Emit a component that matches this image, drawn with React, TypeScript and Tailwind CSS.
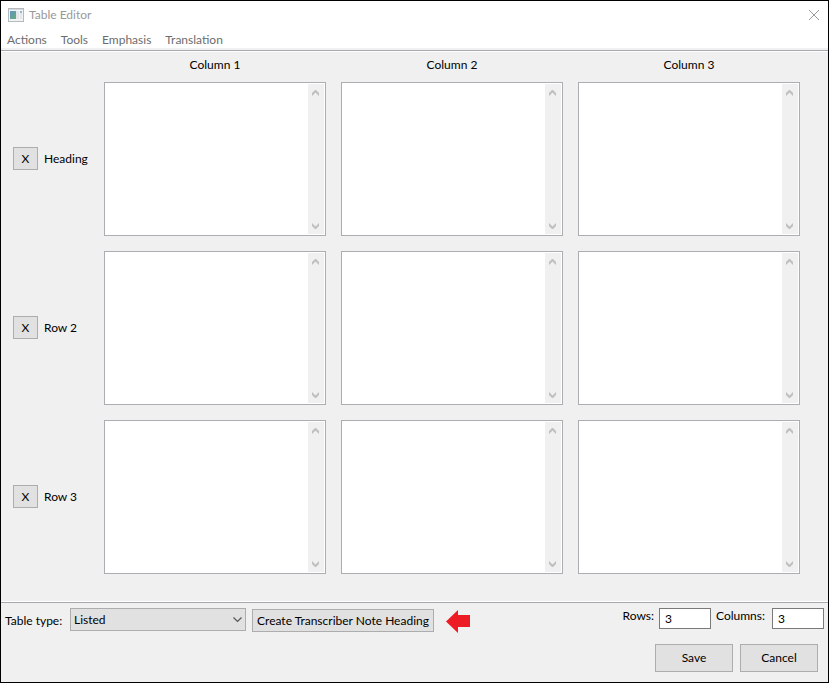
import { useState } from 'react';

const MENUS = ['Actions', 'Tools', 'Emphasis', 'Translation'];
const COLUMNS = ['Column 1', 'Column 2', 'Column 3'];
const ROWS = ['Heading', 'Row 2', 'Row 3'];
const TABLE_TYPES = ['Listed', 'Simple', 'Stairstep', 'Linear'];

function WindowIcon() {
  return (
    <svg width="16" height="14" viewBox="0 0 16 14" shapeRendering="crispEdges" aria-hidden="true">
      <defs>
        <linearGradient id="pane" x1="0" y1="0" x2="1" y2="1">
          <stop offset="0" stopColor="#6595c4" />
          <stop offset="1" stopColor="#5fae78" />
        </linearGradient>
      </defs>
      <rect x="0.5" y="0.5" width="15" height="13" fill="#f1f3f5" stroke="#b4b9c0" />
      <rect x="1" y="1" width="14" height="1" fill="#d5d9de" />
      <rect x="2" y="3" width="6" height="8" fill="url(#pane)" />
      <rect x="8" y="3" width="3" height="8" fill="#e4e7ea" />
      <rect x="12" y="3" width="2" height="2" fill="#8fbccd" />
      <rect x="12" y="5" width="2" height="6" fill="#e4e7ea" />
    </svg>
  );
}

function ScrollArrow({ down = false }: { down?: boolean }) {
  return (
    <svg width="8" height="6" viewBox="0 0 8 6" aria-hidden="true">
      <path d={down ? 'M0 0v3l3 3h1l3-3V0L3.5 3.5z' : 'M0 6V3l3-3h1l3 3v3L3.5 2.5z'} fill="#bfbfbf" />
    </svg>
  );
}

function Cell({ label }: { label: string }) {
  return (
    <div className="flex h-[154px] border border-[#abadb3] bg-white p-px">
      <textarea aria-label={label} className="min-w-0 flex-1 resize-none overflow-hidden px-1 outline-none" />
      <div className="flex w-4 flex-col items-center justify-between bg-[#f0f0f0] pt-1.5 pb-[5px]" aria-hidden="true">
        <ScrollArrow />
        <ScrollArrow down />
      </div>
    </div>
  );
}

export default function App() {
  const [rows, setRows] = useState('3');
  const [columns, setColumns] = useState('3');

  return (
    <div className="flex min-h-screen flex-col border border-black bg-[#f0f0f0] font-['Lato','Open_Sans',sans-serif] text-[12px] leading-4 text-black">
      <header className="border-b border-[#a7a8b0] bg-white">
        <div className="flex h-7 items-center gap-[5px] pr-2 pl-[7px] text-[#999999]">
          <WindowIcon />
          <h1 className="flex-1">Table Editor</h1>
          <button type="button" aria-label="Close">
            <svg width="12" height="12" viewBox="0 0 12 12" fill="none" stroke="#999999" aria-hidden="true">
              <path d="M1 1l10 10M11 1L1 11" />
            </svg>
          </button>
        </div>
        <nav className="flex h-[19px] items-end gap-3.5 px-1.5 text-[#6d6d6d]">
          {MENUS.map((menu) => (
            <button key={menu} type="button">
              {menu}
            </button>
          ))}
        </nav>
        <div className="h-0.5 bg-[#f0f0f0]" />
      </header>

      <main className="flex-1 border-t border-white pr-7 pl-3">
        <div className="grid grid-cols-[76px_1fr_1fr_1fr] gap-x-[15px] pt-[5px] pb-[9px] text-center">
          <span />
          {COLUMNS.map((column) => (
            <span key={column}>{column}</span>
          ))}
        </div>
        <div className="grid grid-cols-[76px_1fr_1fr_1fr] gap-[15px]">
          {ROWS.map((row) => (
            <div key={row} className="contents">
              <div className="flex items-center gap-1.5 pb-px">
                <button
                  type="button"
                  aria-label={`Delete ${row}`}
                  className="h-[23px] w-[25px] shrink-0 border border-[#adadad] bg-[#e1e1e1]"
                >
                  X
                </button>
                <span>{row}</span>
              </div>
              {COLUMNS.map((column) => (
                <Cell key={column} label={`${row}, ${column}`} />
              ))}
            </div>
          ))}
        </div>
      </main>

      <div className="h-px bg-white" />
      <footer className="flex items-start justify-between border-t border-[#a7a8b0] pt-[5px] pr-1 pb-2.5 pl-1">
        <div className="flex h-[25px] items-center gap-1.5">
          <label htmlFor="table-type" className="w-[59px] whitespace-nowrap">
            Table type:
          </label>
          <div className="relative self-start">
            <select
              id="table-type"
              className="block h-[23px] w-44 appearance-none border border-[#adadad] bg-[#e1e1e1] px-[3px]"
            >
              {TABLE_TYPES.map((type) => (
                <option key={type}>{type}</option>
              ))}
            </select>
            <svg
              className="pointer-events-none absolute top-[9px] right-1"
              width="9"
              height="6"
              viewBox="0 0 9 6"
              fill="none"
              stroke="#555555"
              strokeWidth="1.2"
              aria-hidden="true"
            >
              <path d="M0.5 0.5l4 4 4-4" />
            </svg>
          </div>
          <button type="button" className="h-[23px] w-[182px] border border-[#adadad] bg-[#e1e1e1] whitespace-nowrap">
            Create Transcriber Note Heading
          </button>
          <svg className="ml-1.5 self-end" width="24" height="24" viewBox="0 0 24 24" fill="#ed1c24" aria-hidden="true">
            <path d="M0 12.5L12 1v5h12v12H12v6z" />
          </svg>
        </div>

        <div>
          <div className="flex items-start justify-end gap-[5px]">
            <label htmlFor="rows">Rows:</label>
            <input
              id="rows"
              value={rows}
              onChange={(e) => setRows(e.target.value)}
              className="h-[21px] w-[52px] border border-[#7a7a7a] bg-white px-[5px] outline-none"
            />
            <label htmlFor="columns" className="w-[51px]">
              Columns:
            </label>
            <input
              id="columns"
              value={columns}
              onChange={(e) => setColumns(e.target.value)}
              className="h-[21px] w-[52px] border border-[#7a7a7a] bg-white px-[5px] outline-none"
            />
          </div>
          <div className="mt-[15px] flex justify-end gap-[7px] pr-1.5">
            <button type="button" className="h-7 w-[78px] border border-[#adadad] bg-[#e1e1e1]">
              Save
            </button>
            <button type="button" className="h-7 w-[78px] border border-[#adadad] bg-[#e1e1e1]">
              Cancel
            </button>
          </div>
        </div>
      </footer>
    </div>
  );
}
